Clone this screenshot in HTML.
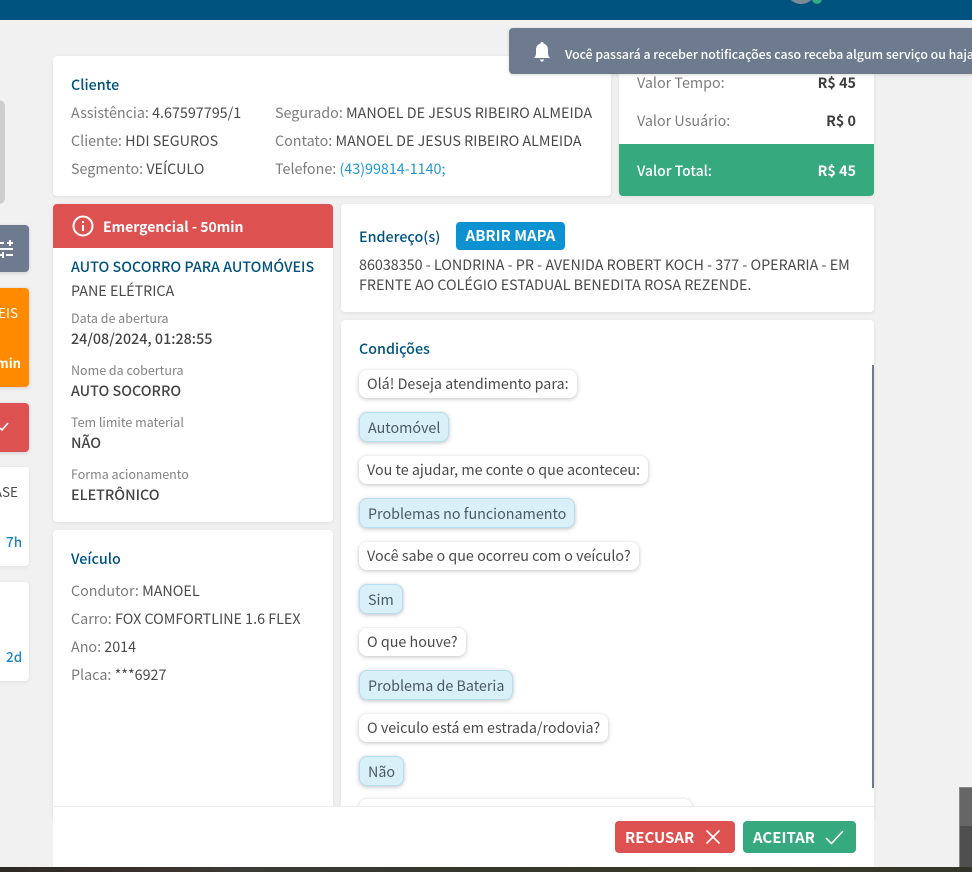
<!DOCTYPE html>
<html lang="pt-BR"><head><meta charset="utf-8"><title>Serviço</title>
<style>
*{box-sizing:border-box}
html,body{margin:0;padding:0}
body{width:972px;height:872px;position:relative;overflow:hidden;background:#f1f1f1;font-family:"Noto Sans CJK JP","Liberation Sans",sans-serif;font-size:14.32px;color:#4a4a4a}
.a{position:absolute}
.t{position:absolute;white-space:nowrap;line-height:20px}
.card{position:absolute;background:#fff;border-radius:4px;box-shadow:0 1px 4px rgba(0,0,0,.08)}
.g{color:#7c7c7c}
.h{color:#00527f;font-weight:500}
.lb{color:#838383;font-size:12.5px}
.v{font-weight:500;color:#444}
.b{position:absolute;left:359px;height:28px;line-height:28px;padding:0 8px;background:#fff;border-radius:8px;box-shadow:0 1px 4px rgba(0,0,0,.25);white-space:nowrap}
.u{height:30px;line-height:30px;padding:0 8px;background:#d9f0f9;border:1px solid #b5dff0;color:#4a5a60}
</style></head><body>
<div class="a" style="left:0;top:0;width:972px;height:20px;background:#00527f"></div>
<div class="a" style="left:786px;top:-26px;width:30px;height:30px;border-radius:50%;background:#7f8a96"></div>
<div class="a" style="left:812px;top:-6px;width:10px;height:10px;border-radius:50%;background:#35a97f"></div>

<!-- left list -->
<div class="a" style="left:-10px;top:100px;width:15px;height:104px;border-radius:6px;background:#cdcdcd"></div>
<div class="a" style="left:-10px;top:225px;width:39px;height:47px;border-radius:4px;background:#6e7b8e;box-shadow:0 1px 4px rgba(0,0,0,.15)"></div>
<svg class="a" style="left:0;top:238px" width="16" height="22" viewBox="0 0 16 22" fill="none" stroke="#fff" stroke-width="2"><path d="M0 5H4M7 5H13M10 2V8M0 11H13M0 17H3M3 14V20M6 17H13"/></svg>
<div class="a" style="left:-10px;top:288px;width:39px;height:99px;border-radius:4px;background:#ff8a00;box-shadow:0 1px 4px rgba(0,0,0,.15)"></div>
<div class="t" style="left:-10px;top:302px;width:28px;text-align:right;color:#fff;font-size:13.5px">EIS</div>
<div class="t" style="left:-10px;top:353px;width:31px;text-align:right;color:#fff;font-weight:700;font-size:13px">min</div>
<div class="a" style="left:-10px;top:403px;width:39px;height:49px;border-radius:4px;background:#de5151;box-shadow:0 1px 4px rgba(0,0,0,.15)"></div>
<svg class="a" style="left:0;top:420px" width="10" height="12" fill="none" stroke="#fff" stroke-width="1.6"><path d="M0 8L2 10L8 3"/></svg>
<div class="card" style="left:-10px;top:467px;width:39px;height:99px"></div>
<div class="t" style="left:-10px;top:481px;width:28px;text-align:right;font-size:13.5px">ASE</div>
<div class="t" style="left:6px;top:531px;color:#1b86c4;font-weight:500;font-size:13.5px">7h</div>
<div class="card" style="left:-10px;top:582px;width:39px;height:99px"></div>
<div class="t" style="left:6px;top:646px;color:#1b86c4;font-weight:500;font-size:13.5px">2d</div>

<!-- client -->
<div class="card" style="left:53px;top:56px;width:558px;height:140px"></div>
<div class="t h" style="left:71px;top:75px">Cliente</div>
<div class="t" style="left:71px;top:103px"><span class="g">Assistência:</span> 4.67597795/1</div>
<div class="t" style="left:71px;top:131px"><span class="g">Cliente:</span> HDI SEGUROS</div>
<div class="t" style="left:71px;top:159px"><span class="g">Segmento:</span> VEÍCULO</div>
<div class="t" style="left:275px;top:103px"><span class="g">Segurado:</span> MANOEL DE JESUS RIBEIRO ALMEIDA</div>
<div class="t" style="left:275px;top:131px"><span class="g">Contato:</span> MANOEL DE JESUS RIBEIRO ALMEIDA</div>
<div class="t" style="left:275px;top:159px"><span class="g">Telefone:</span> <span style="color:#1b9ad6">(43)99814-1140;</span></div>

<!-- values -->
<div class="card" style="left:619px;top:56px;width:255px;height:140px"></div>
<div class="t g" style="left:637px;top:73px">Valor Tempo:</div>
<div class="t" style="right:116px;top:73px;font-weight:700;color:#3d3d3d">R$ 45</div>
<div class="t g" style="left:637px;top:111px">Valor Usuário:</div>
<div class="t" style="right:116px;top:111px;font-weight:700;color:#3d3d3d">R$ 0</div>
<div class="a" style="left:619px;top:144px;width:255px;height:52px;background:#36a97f;border-radius:0 0 4px 4px"></div>
<div class="t" style="left:637px;top:161px;color:#fff;font-weight:500;font-size:14px">Valor Total:</div>
<div class="t" style="right:116px;top:161px;color:#fff;font-weight:700">R$ 45</div>

<!-- notification -->
<div class="a" style="left:509px;top:28px;width:470px;height:46px;background:#6e7b8e;border-radius:4px;box-shadow:0 1px 3px rgba(0,0,0,.15)"></div>
<svg class="a" style="left:532px;top:41px" width="20" height="22" viewBox="0 0 20 22" fill="#fff"><path d="M10 1C11 1 11.6 1.7 11.6 2.6C14.5 3.4 16 5.6 16 9V12.5C16 14.5 17 15.6 18 17H2C3 15.6 4 14.5 4 12.5V9C4 5.6 5.5 3.4 8.4 2.6C8.4 1.7 9 1 10 1ZM8 18.5H12C12 19.8 11 20.6 10 20.6S8 19.8 8 18.5Z"/></svg>
<div class="t" style="left:565px;top:44px;width:407px;overflow:hidden;color:#fff;font-size:12.3px;font-weight:500">Você passará a receber notificações caso receba algum serviço ou haja</div>

<!-- emergency card -->
<div class="card" style="left:53px;top:204px;width:280px;height:318px"></div>
<div class="a" style="left:53px;top:204px;width:280px;height:44px;background:#de5151;border-radius:4px 4px 0 0"></div>
<svg class="a" style="left:72px;top:215px" width="22" height="22" viewBox="0 0 22 22" fill="none" stroke="#fff" stroke-width="2"><circle cx="11" cy="11" r="9.5"/><path d="M11 10V16M11 6V8"/></svg>
<div class="t" style="left:103px;top:217px;color:#fff;font-size:14px;font-weight:700">Emergencial - 50min</div>
<div class="t h" style="left:71px;top:257px">AUTO SOCORRO PARA AUTOMÓVEIS</div>
<div class="t" style="left:71px;top:281px">PANE ELÉTRICA</div>
<div class="t lb" style="left:71px;top:308px">Data de abertura</div>
<div class="t v" style="left:71px;top:329px">24/08/2024, 01:28:55</div>
<div class="t lb" style="left:71px;top:360px">Nome da cobertura</div>
<div class="t v" style="left:71px;top:381px">AUTO SOCORRO</div>
<div class="t lb" style="left:71px;top:412px">Tem limite material</div>
<div class="t v" style="left:71px;top:433px">NÃO</div>
<div class="t lb" style="left:71px;top:464px">Forma acionamento</div>
<div class="t v" style="left:71px;top:485px">ELETRÔNICO</div>

<!-- vehicle -->
<div class="card" style="left:53px;top:530px;width:280px;height:290px"></div>
<div class="t h" style="left:71px;top:549px">Veículo</div>
<div class="t" style="left:71px;top:581px"><span class="g">Condutor:</span> MANOEL</div>
<div class="t" style="left:71px;top:609px"><span class="g">Carro:</span> FOX COMFORTLINE 1.6 FLEX</div>
<div class="t" style="left:71px;top:637px"><span class="g">Ano:</span> 2014</div>
<div class="t" style="left:71px;top:665px"><span class="g">Placa:</span> ***6927</div>

<!-- address -->
<div class="card" style="left:341px;top:204px;width:533px;height:108px"></div>
<div class="t h" style="left:359px;top:227px">Endereço(s)</div>
<div class="a" style="left:456px;top:222px;width:109px;height:28px;background:#0c92d3;border-radius:4px;color:#fff;font-size:15px;font-weight:700;line-height:28px;text-align:center">ABRIR MAPA</div>
<div class="t" style="left:359px;top:255px">86038350 - LONDRINA - PR - AVENIDA ROBERT KOCH - 377 - OPERARIA - EM</div>
<div class="t" style="left:359px;top:275px">FRENTE AO COLÉGIO ESTADUAL BENEDITA ROSA REZENDE.</div>

<!-- conditions -->
<div class="card" style="left:341px;top:320px;width:533px;height:500px"></div>
<div class="t h" style="left:359px;top:339px">Condições</div>
<div class="a" style="left:872px;top:365px;width:2px;height:423px;background:#6e7b8e"></div>
<div class="b" style="top:370px">Olá! Deseja atendimento para:</div>
<div class="b u" style="top:412px">Automóvel</div>
<div class="b" style="top:456px">Vou te ajudar, me conte o que aconteceu:</div>
<div class="b u" style="top:498px">Problemas no funcionamento</div>
<div class="b" style="top:542px">Você sabe o que ocorreu com o veículo?</div>
<div class="b u" style="top:584px">Sim</div>
<div class="b" style="top:628px">O que houve?</div>
<div class="b u" style="top:670px">Problema de Bateria</div>
<div class="b" style="top:714px">O veiculo está em estrada/rodovia?</div>
<div class="b u" style="top:756px">Não</div>
<div class="b" style="top:799px;width:333px"></div>

<!-- footer -->
<div class="a" style="left:53px;top:806px;width:821px;height:61px;background:#fff;border-top:1px solid #ececec"></div>
<div class="a" style="left:615px;top:821px;width:120px;height:32px;background:#de5151;border-radius:4px"></div>
<div class="t" style="left:625px;top:828px;color:#fff;font-size:15px;font-weight:700">RECUSAR</div>
<svg class="a" style="left:705px;top:829px" width="16" height="16" fill="none" stroke="#fff" stroke-width="1.6"><path d="M1.5 1.5L14.5 14.5M14.5 1.5L1.5 14.5"/></svg>
<div class="a" style="left:743px;top:821px;width:113px;height:32px;background:#36a97f;border-radius:4px"></div>
<div class="t" style="left:753px;top:828px;color:#fff;font-size:15px;font-weight:700">ACEITAR</div>
<svg class="a" style="left:825px;top:830px" width="19" height="15" fill="none" stroke="#fff" stroke-width="1.5"><path d="M1 8L6.5 13.5L18 1"/></svg>

<!-- bottom -->
<div class="a" style="left:0;top:867px;width:972px;height:5px;background:linear-gradient(90deg,#2c2a26,#3a302a 15%,#3a3a38 25%,#34362a 50%,#3a3a28 75%,#33352a)"></div>
<div class="a" style="left:959px;top:787px;width:13px;height:80px;background:#4f4f4f;border:1px solid #888;border-width:1px 0 0 1px"></div>
<div class="a" style="left:960px;top:788px;width:12px;height:38px;background:#666"></div>
</body></html>
